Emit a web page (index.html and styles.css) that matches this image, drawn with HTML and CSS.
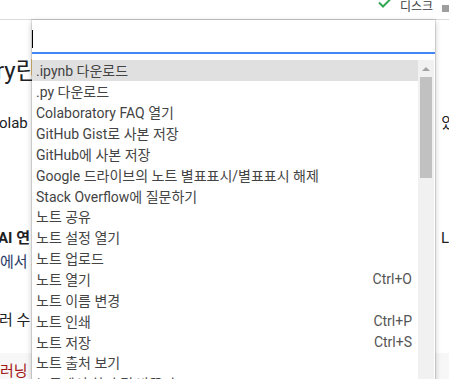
FILE: index.html
```html
<!DOCTYPE html>
<html lang="ko">
<head>
    <meta charset="UTF-8">
    <meta name="viewport" content="width=device-width, initial-scale=1.0">
    <title>명령 팔레트</title>
    <link rel="stylesheet" href="styles.css">
</head>
<body>
    <div class="topbar">
        <svg class="check" width="13" height="8" viewBox="0 0 13 8">
            <path d="M1 2.5 L5 6.5 L12 -0.5" fill="none" stroke="#34a853" stroke-width="2"/>
        </svg>
        <span class="disk">디스크</span>
        <span class="meter"></span>
    </div>

    <!-- 뒤쪽 문서 -->
    <div class="doc">
        <div class="doc-title">ry란?</div>
        <div class="doc-line line-intro"><span class="cut">olab</span><span class="tail">있</span></div>
        <div class="doc-line line-ai"><span class="cut bold">AI 연</span><span class="tail-l">L</span></div>
        <div class="doc-line line-link"><span>에서 사</span></div>
        <div class="doc-line line-more"><span class="cut">러 수</span></div>
        <div class="doc-code"><span>러닝</span></div>
    </div>

    <!-- 명령 팔레트 -->
    <div class="palette">
        <div class="palette-input"><span class="caret"></span></div>
        <div class="palette-body">
            <ul class="commands">
                <li class="active"><span>.ipynb 다운로드</span></li>
                <li><span>.py 다운로드</span></li>
                <li><span>Colaboratory FAQ 열기</span></li>
                <li><span>GitHub Gist로 사본 저장</span></li>
                <li><span>GitHub에 사본 저장</span></li>
                <li><span>Google 드라이브의 노트 별표표시/별표표시 해제</span></li>
                <li><span>Stack Overflow에 질문하기</span></li>
                <li><span>노트 공유</span></li>
                <li><span>노트 설정 열기</span></li>
                <li><span>노트 업로드</span></li>
                <li><span>노트 열기</span><span class="key">Ctrl+O</span></li>
                <li><span>노트 이름 변경</span></li>
                <li><span>노트 인쇄</span><span class="key">Ctrl+P</span></li>
                <li><span>노트 저장</span><span class="key">Ctrl+S</span></li>
                <li><span>노트 출처 보기</span></li>
                <li><span>노트에서 찾기 및 바꾸기</span></li>
            </ul>
            <div class="scrollbar">
                <span class="arrow"></span>
                <span class="thumb"></span>
            </div>
        </div>
    </div>
</body>
</html>
```

FILE: styles.css
```css
html, body {
    margin: 0;
    padding: 0;
}
body {
    width: 449px;
    height: 379px;
    overflow: hidden;
    position: relative;
    background: #fff;
    font-family: Roboto, "Noto Sans CJK KR", sans-serif;
    color: #202124;
}
.topbar {
    height: 19px;
    border-bottom: 1px solid #dadada;
    display: flex;
    justify-content: flex-end;
    align-items: flex-start;
    gap: 9px;
    overflow: hidden;
}
.check {
    display: block;
}
.disk {
    font-size: 12px;
    line-height: 14px;
    color: #3c4043;
}
.meter {
    width: 7px;
    height: 7px;
    margin-top: 5px;
    background: #9e9e9e;
    flex-shrink: 0;
}
.doc {
    display: flex;
    flex-direction: column;
}
.doc-title {
    font-size: 24px;
    line-height: 30px;
    margin-top: 36px;
    margin-left: -4px;
}
.doc-line {
    font-size: 15px;
    line-height: 20px;
    height: 20px;
    display: flex;
    justify-content: space-between;
    white-space: nowrap;
}
.line-intro {
    margin-top: 27px;
}
.line-ai {
    margin-top: 95px;
}
.line-link {
    margin-top: 4px;
    color: #2b3a67;
}
.line-more {
    margin-top: 38px;
}
.cut {
    margin-left: -1px;
}
.bold {
    font-weight: bold;
    margin-left: -2px;
}
.tail {
    margin-right: -6px;
}
.doc-code {
    margin-top: 23px;
    height: 26px;
    background: #f7f7f7;
    font-size: 15px;
    line-height: 20px;
    padding-top: 8px;
    color: #a31515;
}
.palette {
    position: absolute;
    left: 32px;
    top: 20px;
    width: 403px;
    height: 380px;
    background: #fff;
    box-shadow: 0 0 0 1px rgba(0, 0, 0, 0.1), 0 2px 6px rgba(0, 0, 0, 0.25);
}
.palette-input {
    height: 22px;
    padding-top: 10px;
    border-bottom: 2px solid #4285f4;
}
.caret {
    display: block;
    width: 1px;
    height: 18px;
    background: #000;
}
.palette-body {
    display: flex;
    margin-top: 6px;
    margin-right: 1px;
}
.commands {
    list-style: none;
    margin: 0;
    padding: 0;
    flex: 1;
}
.commands li {
    height: 20.86px;
    display: flex;
    justify-content: space-between;
    align-items: center;
    padding: 0 6px 0 4px;
    font-size: 14px;
    color: #444;
    white-space: nowrap;
}
.commands li.active {
    background: #e0e0e0;
}
.key {
    color: #555;
}
.scrollbar {
    width: 16px;
    background: #f1f1f1;
    display: flex;
    flex-direction: column;
    align-items: center;
}
.arrow {
    width: 0;
    height: 0;
    margin-top: 7px;
    border-left: 4px solid transparent;
    border-right: 4px solid transparent;
    border-bottom: 4px solid #a3a3a3;
}
.thumb {
    width: 12px;
    height: 101px;
    margin-top: 6px;
    background: #c1c1c1;
}
```
